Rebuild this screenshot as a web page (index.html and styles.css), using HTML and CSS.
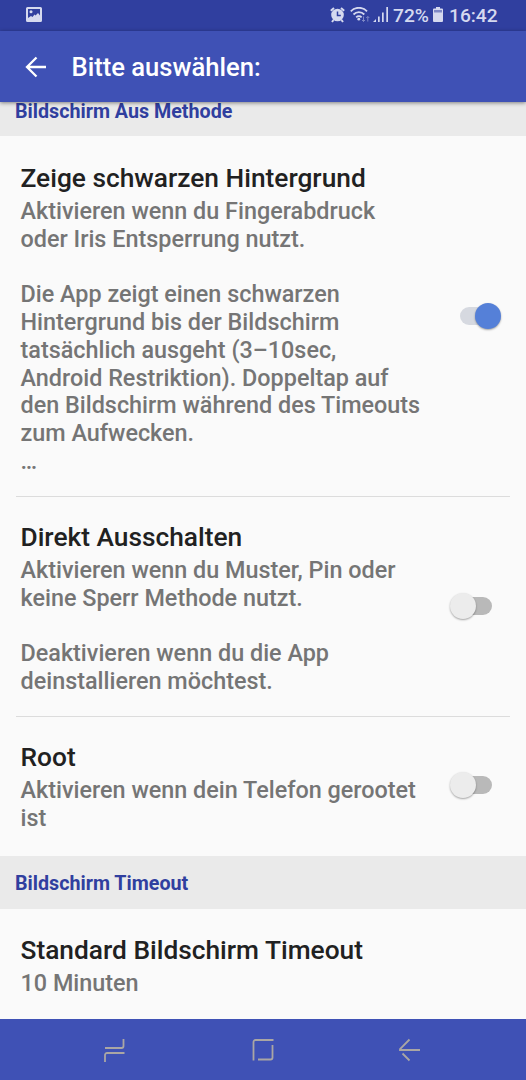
FILE: index.html
```html
<!DOCTYPE html>
<html lang="de">
<head>
<meta charset="utf-8">
<title>Bitte auswählen</title>
<link rel="stylesheet" href="styles.css">
</head>
<body>
<div class="screen">
  <header class="status">
    <svg class="status-photo" width="16" height="16" viewBox="0 0 16 16"><path fill="#d5d9ef" fill-rule="evenodd" d="M1.500 0h13A1.500 1.500 0 0 1 16 1.500v12a1.500 1.500 0 0 1-1.500 1.500h-13A1.500 1.500 0 0 1 0 13.500v-12A1.500 1.500 0 0 1 1.500 0zM2 2v9l3-2 1.500 1 2-2.500 1 1L12 6l2 2.500V2z"/><circle cx="5" cy="4.700" r="1.500" fill="#d5d9ef"/></svg>
    <div class="status-right">
      <svg width="15" height="16" viewBox="0 0 15 16"><g fill="none" stroke="#d5d9ef" stroke-width="2"><path d="M.8 3.800L4 1M14.200 3.800L11 1M3.500 13L2 15M11.500 13l1.500 2"/></g><circle cx="7.500" cy="8" r="6.300" fill="#d5d9ef"/><path d="M7.500 4.500v4h3.300" fill="none" stroke="#303f9f" stroke-width="1.500"/></svg>
      <svg class="wifi" width="20" height="16" viewBox="0 0 20 16"><g fill="none" stroke="#d5d9ef" stroke-width="1.800"><path d="M.8 4.300C5-.4 12.800-.4 17 4.300M3.500 7.500c3-3.100 7.800-3.100 10.800 0M6.200 10.300c1.500-1.500 4-1.500 5.400 0"/></g><circle cx="8.800" cy="12.200" r="1.400" fill="#d5d9ef"/><path d="M13.500 9.500v5M12 13l1.500 1.500L15 13M17.800 14.500v-5M16.300 11l1.500-1.500 1.500 1.500" stroke="#7e88c6" fill="none"/></svg>
      <svg class="signal" width="16" height="16" viewBox="0 0 16 16" fill="#d5d9ef"><path d="M0 15l3-3v3zM5 9.500h1.700V15H5zM9 5.500h1.700V15H9zM13.300 0H15v15h-1.700z"/></svg>
      <span class="battery-text">72%</span>
      <svg class="battery" width="10" height="16" viewBox="0 0 10 16"><path d="M3 0h4v1.500h2a1 1 0 0 1 1 1V14a1 1 0 0 1-1 1H1a1 1 0 0 1-1-1V2.500a1 1 0 0 1 1-1h2z" fill="#d5d9ef"/><path d="M1 3h8v2.500H1z" fill="#7e88c6"/></svg>
      <span class="clock">16:42</span>
    </div>
  </header>
  <div class="appbar">
    <svg class="back" width="22" height="22" viewBox="0 0 22 22"><path d="M11.500 1.500L2 11l9.500 9.500M2 11h19" fill="none" stroke="#fff" stroke-width="2.300"/></svg>
    <h1 class="appbar-title">Bitte auswählen:</h1>
  </div>
  <main class="list">
    <h2 class="section section-clipped">Bildschirm Aus Methode</h2>
    <section class="item item-black">
      <div class="copy">
        <h3 class="title">Zeige schwarzen Hintergrund</h3>
        <p class="desc">Aktivieren wenn du Fingerabdruck<br>oder Iris Entsperrung nutzt.<br><br>Die App zeigt einen schwarzen<br>Hintergrund bis der Bildschirm<br>tatsächlich ausgeht (3–10sec,<br>Android Restriktion). Doppeltap auf<br>den Bildschirm während des Timeouts<br>zum Aufwecken.<br>…</p>
      </div>
      <span class="switch on"><span class="thumb"></span></span>
    </section>
    <section class="item item-direct">
      <div class="copy">
        <h3 class="title">Direkt Ausschalten</h3>
        <p class="desc">Aktivieren wenn du Muster, Pin oder<br>keine Sperr Methode nutzt.<br><br>Deaktivieren wenn du die App<br>deinstallieren möchtest.</p>
      </div>
      <span class="switch"><span class="thumb"></span></span>
    </section>
    <section class="item item-root">
      <div class="copy">
        <h3 class="title">Root</h3>
        <p class="desc">Aktivieren wenn dein Telefon gerootet<br>ist</p>
      </div>
      <span class="switch"><span class="thumb"></span></span>
    </section>
    <h2 class="section">Bildschirm Timeout</h2>
    <section class="item item-timeout">
      <div class="copy">
        <h3 class="title">Standard Bildschirm Timeout</h3>
        <p class="desc">10 Minuten</p>
      </div>
    </section>
  </main>
  <nav class="nav">
    <svg width="22" height="24" viewBox="0 0 22 24"><path d="M1 10h16.500a2 2 0 0 0 2-2V1M20.500 15H3a2 2 0 0 0-2 2v7"/></svg>
    <svg width="22" height="22" viewBox="0 0 22 22"><path d="M1.500 21.500V3a2 2 0 0 1 2-2h18M20.500 6V18.500a2 2 0 0 1-2 2H6"/></svg>
    <svg width="22" height="24" viewBox="0 0 22 24"><path d="M10.500 1.500L1 11v1h20M3.500 15.500l7 7"/></svg>
  </nav>
</div>
</body>
</html>
```
FILE: styles.css
```css
* { box-sizing: border-box; }
body { margin: 0; font-family: Roboto, sans-serif; font-weight: 500; background: #fafafa; }
h1, h2, h3, p { margin: 0; font-weight: 500; }
svg { display: block; flex: none; }
.screen { width: 526px; height: 1080px; display: flex; flex-direction: column; overflow: hidden; }

.status { height: 31px; flex: none; background: #303f9f; color: #d5d9ef; display: flex; justify-content: space-between; padding: 7px 28px 0 26px; }
.status-right { display: flex; font-size: 19.200px; line-height: 17px; }
.wifi { margin-left: 5px; }
.signal { margin-left: 3px; }
.battery-text { margin-left: 4px; width: 37px; }
.battery { margin-left: 3px; }
.clock { margin-left: 6px; width: 49px; white-space: nowrap; }

.appbar { height: 71px; flex: none; background: #3f51b5; color: #fff; display: flex; align-items: center; padding: 1px 0 0 25px; box-shadow: 0 1px 4px rgba(0, 0, 0, .45); position: relative; }
.appbar-title { margin-left: 24.500px; font-size: 25.600px; line-height: 31px; white-space: nowrap; }

.list { flex: 1; min-height: 0; }
.section { height: 53px; padding-left: 15px; background: #eaeaea; color: #303f9f; font-size: 19.700px; line-height: 55px; font-weight: 700; white-space: nowrap; }
.section-clipped { height: 34px; line-height: 19px; }

.item { display: flex; position: relative; padding: 26px 0 0 20.500px; }
.item-black { height: 360px; padding-top: 27px; }
.item-direct { height: 220px; }
.item-root { height: 140px; }
.item-timeout { height: 110px; }
.item-direct::before, .item-root::before { content: ""; position: absolute; top: 0; left: 16px; right: 16px; height: 1px; background: #dcdcdc; }
.copy { flex: none; width: 430px; }
.title { color: #212121; font-size: 26.300px; line-height: 31px; white-space: nowrap; }
.desc { margin-top: 4px; color: #757575; font-size: 23.380px; line-height: 27.750px; white-space: nowrap; }

.switch { align-self: flex-start; position: relative; width: 32px; height: 18px; margin-left: 9px; border-radius: 9px; background: #b9b9b9; }
.item-black .switch { margin-top: 144px; }
.item-direct .switch { margin-top: 75px; }
.item-root .switch { margin-top: 34px; }
.switch.on { background: #d6d9e0; }
.thumb { position: absolute; left: -10px; top: -4px; width: 26px; height: 26px; border-radius: 50%; background: #ececec; box-shadow: 0 1px 2px rgba(0, 0, 0, .35); }
.on .thumb { left: 15.500px; background: #5580d8; }

.nav { height: 61px; flex: none; background: #3f51b5; display: flex; justify-content: space-between; align-items: center; padding: 0 105px 0 104px; }
.nav path { fill: none; stroke: #aaa6a4; stroke-width: 1.800; }
```
